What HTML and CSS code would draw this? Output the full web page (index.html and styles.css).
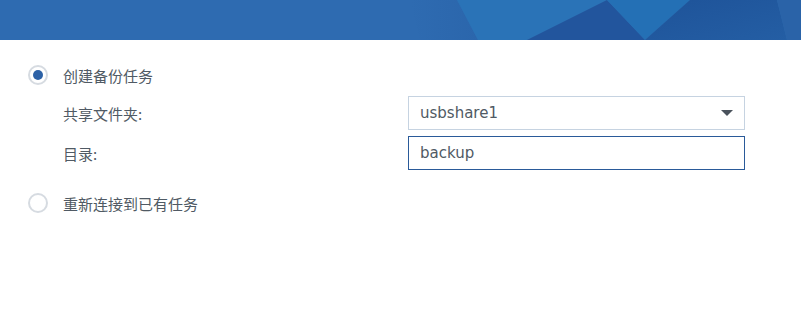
FILE: index.html
```html
<!DOCTYPE html>
<html lang="zh-CN">
<head>
    <meta charset="UTF-8">
    <meta name="viewport" content="width=device-width, initial-scale=1.0">
    <title>备份任务</title>
    <link rel="stylesheet" href="styles.css">
</head>
<body>
    <div class="banner">
        <svg class="banner-art" viewBox="0 0 801 40" preserveAspectRatio="none">
            <defs>
                <linearGradient id="fade" x1="0" x2="1" y1="0" y2="0">
                    <stop offset="0" stop-color="#2e6bb1"/>
                    <stop offset="1" stop-color="#2b66ac"/>
                </linearGradient>
                <linearGradient id="deep" x1="0" x2="1" y1="0" y2="1">
                    <stop offset="0" stop-color="#1e5399"/>
                    <stop offset="1" stop-color="#245ea4"/>
                </linearGradient>
            </defs>
            <rect x="0" y="0" width="801" height="40" fill="#2e6bb1"/>
            <polygon points="410,0 457,0 478,40 420,40" fill="url(#fade)"/>
            <polygon points="457,0 607,0 527,40 478,40" fill="#2a73b7"/>
            <polygon points="607,0 527,40 645,40" fill="#22559d"/>
            <polygon points="607,0 690,0 645,40" fill="#2470b5"/>
            <polygon points="690,0 777,0 787,40 645,40" fill="url(#deep)"/>
            <polygon points="777,0 801,0 801,40 787,40" fill="#2a63a8"/>
        </svg>
    </div>

    <div class="content">
        <label class="option">
            <span class="radio checked"></span>
            <span class="option-text">创建备份任务</span>
        </label>

        <div class="fields">
            <div class="field-row">
                <span class="field-label">共享文件夹:</span>
                <div class="select">
                    <span>usbshare1</span>
                    <span class="caret"></span>
                </div>
            </div>
            <div class="field-row">
                <span class="field-label">目录:</span>
                <div class="text-input">backup</div>
            </div>
        </div>

        <label class="option second">
            <span class="radio"></span>
            <span class="option-text">重新连接到已有任务</span>
        </label>
    </div>
</body>
</html>
```

FILE: styles.css
```css
body {
    margin: 0;
    background-color: #fff;
    font-family: "DejaVu Sans", "Noto Sans CJK SC", sans-serif;
    font-size: 15px;
    color: #505a64;
}
.banner {
    height: 40px;
    overflow: hidden;
}
.banner-art {
    display: block;
    width: 100%;
    height: 40px;
}
.content {
    padding: 20px 0 0 28px;
}
.option {
    display: flex;
    align-items: center;
    gap: 15px;
    height: 30px;
}
.option.second {
    margin-top: 18px;
}
.option-text {
    font-family: "Noto Sans CJK SC", sans-serif;
}
.radio {
    box-sizing: border-box;
    width: 20px;
    height: 20px;
    border: 2px solid #d6dbe1;
    border-radius: 50%;
    display: flex;
    align-items: center;
    justify-content: center;
}
.radio.checked::after {
    content: "";
    width: 10px;
    height: 10px;
    border-radius: 50%;
    background-color: #2c61a6;
}
.fields {
    display: flex;
    flex-direction: column;
    gap: 6px;
    margin-top: 6px;
}
.field-row {
    display: flex;
    align-items: center;
}
.field-label {
    width: 345px;
    padding-left: 35px;
    font-family: "Noto Sans CJK SC", sans-serif;
}
.select, .text-input {
    box-sizing: border-box;
    width: 337px;
    height: 34px;
    padding: 0 11px;
    display: flex;
    align-items: center;
    justify-content: space-between;
}
.select {
    border: 1px solid #c6d3e1;
}
.text-input {
    border: 1px solid #2a5a99;
}
.caret {
    width: 0;
    height: 0;
    border-left: 6px solid transparent;
    border-right: 6px solid transparent;
    border-top: 6px solid #4a525c;
    margin-right: 0;
}
```
